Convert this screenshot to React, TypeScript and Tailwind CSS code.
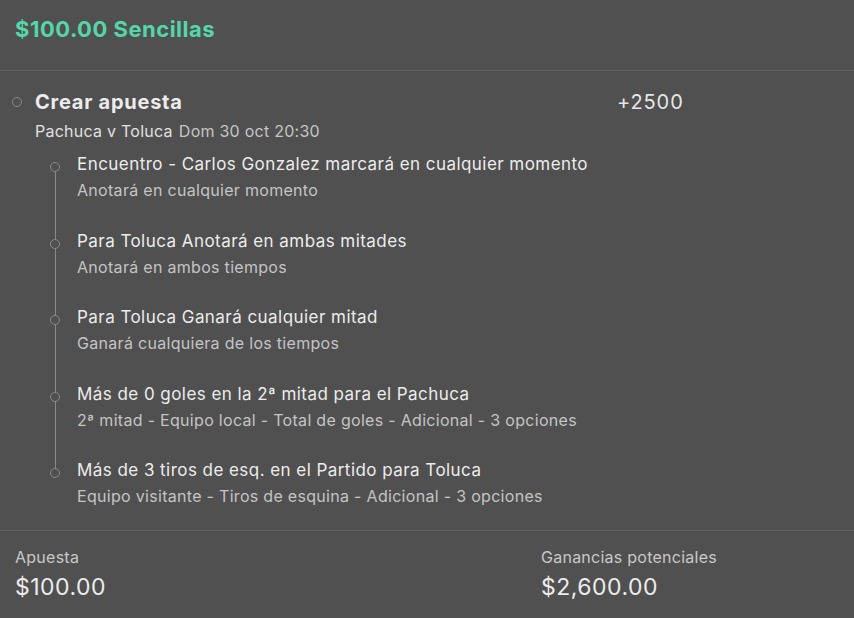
import React from 'react'

type Leg = { title: string; detail: string }

const legs: Leg[] = [
  { title: 'Encuentro - Carlos Gonzalez marcará en cualquier momento', detail: 'Anotará en cualquier momento' },
  { title: 'Para Toluca Anotará en ambas mitades', detail: 'Anotará en ambos tiempos' },
  { title: 'Para Toluca Ganará cualquier mitad', detail: 'Ganará cualquiera de los tiempos' },
  { title: 'Más de 0 goles en la 2ª mitad para el Pachuca', detail: '2ª mitad - Equipo local - Total de goles - Adicional - 3 opciones' },
  { title: 'Más de 3 tiros de esq. en el Partido para Toluca', detail: 'Equipo visitante - Tiros de esquina - Adicional - 3 opciones' },
]

function Dot() {
  return <span className="block h-[10px] w-[10px] rounded-full border border-[#8a8a8a] bg-[#505050]" />
}

export default function App() {
  return (
    <div className="min-h-[618px] w-full bg-[#505050] font-['Inter',sans-serif] text-[#e6e6e6]">
      <header className="flex h-[71px] items-center border-b border-[#616161] px-[15px] pb-[12px]">
        <h1 className="text-[22px] font-bold tracking-[0.5px] text-[#55d6a9]">$100.00 Sencillas</h1>
      </header>

      <section className="border-b border-[#616161] pb-[22px] pt-[18px]">
        <div className="flex items-center">
          <div className="flex w-[34px] justify-center">
            <Dot />
          </div>
          <h2 className="w-[583px] pl-px text-[20px] font-bold leading-[26px] tracking-[0.75px] text-[#ececec]">Crear apuesta</h2>
          <span className="text-[20px] leading-[26px] tracking-[0.9px] text-[#e6e6e6]">+2500</span>
        </div>
        <div className="mt-[6px] pl-[35px] text-[16px] leading-[20px] tracking-[0.25px]">
          <span className="text-[#e0e0e0]">Pachuca v Toluca</span>
          <span className="ml-[6px] text-[#c4c4c4]">Dom 30 oct 20:30</span>
        </div>

        <ul className="relative mt-[11px]">
          <span className="absolute left-[55px] top-[10px] h-[306px] w-px bg-[#8a8a8a]" />
          {legs.map((leg, i) => (
            <li key={i} className={`relative flex ${i > 0 ? 'mt-[26.5px]' : ''}`}>
              <div className="w-[77px] pl-[50px] pt-[10px]">
                <Dot />
              </div>
              <div>
                <p className="text-[17px] leading-[24px] tracking-[0.45px] text-[#ececec]">{leg.title}</p>
                <p className="mt-[2px] text-[16px] leading-[24px] tracking-[0.3px] text-[#c4c4c4]">{leg.detail}</p>
              </div>
            </li>
          ))}
        </ul>
      </section>

      <footer className="flex px-[15px] pt-[16px]">
        <div className="w-[526px]">
          <p className="text-[16px] leading-[20px] tracking-[0.25px] text-[#c8c8c8]">Apuesta</p>
          <p className="mt-[5px] text-[23px] leading-[30px] tracking-[0.5px] text-[#ececec]">$100.00</p>
        </div>
        <div>
          <p className="text-[16px] leading-[20px] tracking-[0.25px] text-[#c8c8c8]">Ganancias potenciales</p>
          <p className="mt-[5px] text-[23px] leading-[30px] tracking-[0.5px] text-[#ececec]">$2,600.00</p>
        </div>
      </footer>
    </div>
  )
}
